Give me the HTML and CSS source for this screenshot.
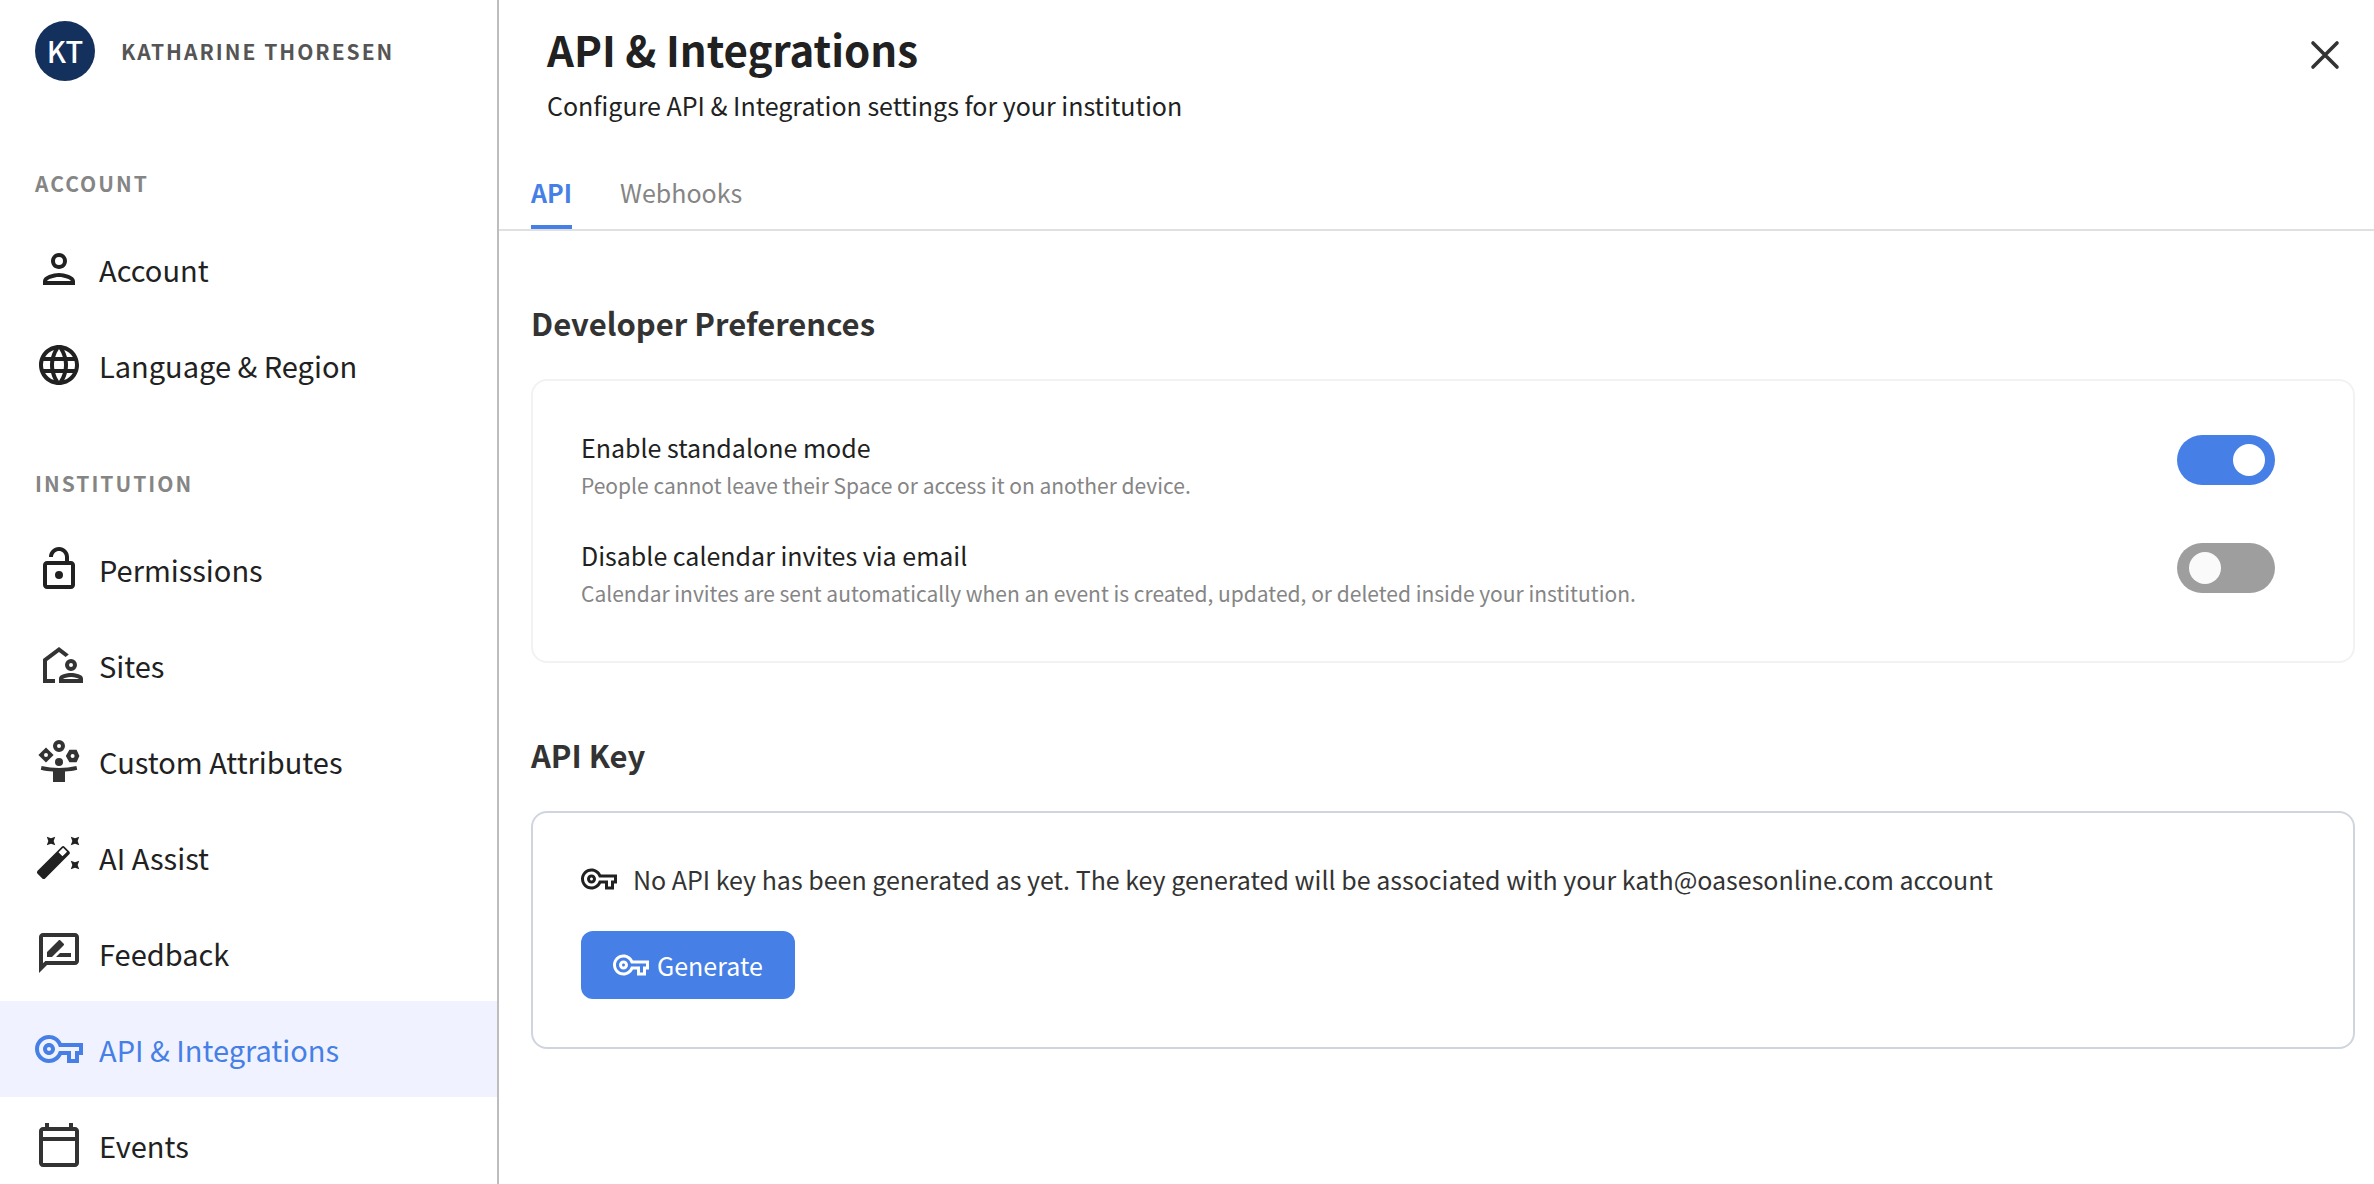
FILE: index.html
```html
<!DOCTYPE html>
<html lang="en">
  <head>
    <title>API &amp; Integrations</title>
    <meta charset="utf-8" />
    <meta name="viewport" content="width=device-width, initial-scale=1" />
    <link rel="stylesheet" href="styles.css">
  </head>
  <body>
    <!-- shared icon, used in the sidebar, the key card and the button -->
    <svg class="sprite" aria-hidden="true">
      <symbol id="icon-key" viewBox="0 0 24 24">
        <path d="M22 19h-6v-4h-2.68c-1.14 2.42-3.6 4-6.32 4-3.86 0-7-3.14-7-7s3.14-7 7-7c2.72 0 5.17 1.58 6.32 4H24v6h-2v4zm-4-2h2v-4h2v-2H11.94l-.23-.67C11.01 8.34 9.11 7 7 7c-2.76 0-5 2.24-5 5s2.24 5 5 5c2.11 0 4.01-1.34 4.71-3.33l.23-.67H18v4zM7 15c-1.65 0-3-1.35-3-3s1.35-3 3-3 3 1.35 3 3-1.35 3-3 3zm0-4c-.55 0-1 .45-1 1s.45 1 1 1 1-.45 1-1-.45-1-1-1z"/>
      </symbol>
    </svg>

    <div class="layout">
      <aside class="sidebar">
        <div class="profile">
          <span class="avatar">KT</span>
          <span class="profile-name">KATHARINE THORESEN</span>
        </div>

        <nav>
          <h2 class="nav-label">ACCOUNT</h2>
          <a class="nav-item" href="#">
            <svg class="icon" viewBox="0 0 24 24"><path d="M12 6a2 2 0 1 1 0 4 2 2 0 0 1 0-4m0 10c2.7 0 5.8 1.29 6 2H6c.23-.72 3.31-2 6-2m0-12C9.79 4 8 5.79 8 8s1.79 4 4 4 4-1.79 4-4-1.79-4-4-4zm0 10c-2.67 0-8 1.34-8 4v2h16v-2c0-2.66-5.33-4-8-4z"/></svg>
            Account
          </a>
          <a class="nav-item" href="#">
            <svg class="icon" viewBox="0 0 24 24"><path d="M11.99 2C6.47 2 2 6.48 2 12s4.47 10 9.99 10C17.52 22 22 17.52 22 12S17.52 2 11.99 2zm6.93 6h-2.95c-.32-1.25-.78-2.45-1.38-3.56 1.84.63 3.37 1.91 4.33 3.56zM12 4.04c.83 1.2 1.48 2.53 1.91 3.96h-3.82c.43-1.43 1.08-2.76 1.91-3.96zM4.26 14C4.1 13.36 4 12.69 4 12s.1-1.36.26-2h3.38c-.08.66-.14 1.32-.14 2s.06 1.34.14 2H4.26zm.82 2h2.95c.32 1.25.78 2.45 1.38 3.56-1.84-.63-3.37-1.9-4.33-3.56zm2.95-8H5.08c.96-1.66 2.49-2.93 4.33-3.56C8.81 5.55 8.35 6.75 8.03 8zM12 19.96c-.83-1.2-1.48-2.53-1.91-3.96h3.82c-.43 1.43-1.08 2.76-1.91 3.96zM14.34 14H9.66c-.09-.66-.16-1.32-.16-2s.07-1.35.16-2h4.68c.09.65.16 1.32.16 2s-.07 1.34-.16 2zm.25 5.56c.6-1.11 1.06-2.31 1.38-3.56h2.95c-.96 1.65-2.49 2.93-4.33 3.56zM16.36 14c.08-.66.14-1.32.14-2s-.06-1.34-.14-2h3.38c.16.64.26 1.31.26 2s-.1 1.36-.26 2h-3.38z"/></svg>
            Language &amp; Region
          </a>

          <h2 class="nav-label">INSTITUTION</h2>
          <a class="nav-item" href="#">
            <svg class="icon" viewBox="0 0 24 24"><path d="M18 8h-1V6c0-2.76-2.24-5-5-5S7 3.24 7 6h2c0-1.66 1.34-3 3-3s3 1.34 3 3v2H6c-1.1 0-2 .9-2 2v10c0 1.1.9 2 2 2h12c1.1 0 2-.9 2-2V10c0-1.1-.9-2-2-2zm0 12H6V10h12v10zm-6-3a2 2 0 1 0 0-4 2 2 0 0 0 0 4z"/></svg>
            Permissions
          </a>
          <a class="nav-item" href="#">
            <svg class="icon icon-soft" viewBox="0 0 24 24"><path d="M4 21V9l8-6 4.9 3.7-1.6 1.3L12 5.5 6 10v9h4v2z"/><path fill-rule="evenodd" d="M18 9a3 3 0 1 0 0 6 3 3 0 0 0 0-6zm0 2a1 1 0 1 1 0 2 1 1 0 0 1 0-2zM18 16c-2 0-6 .7-6 2.7V21h12v-2.3c0-2-4-2.7-6-2.7zm-4 3c.5-.5 2.2-1 4-1s3.500.5 4 1z"/></svg>
            Sites
          </a>
          <a class="nav-item" href="#">
            <svg class="icon icon-soft" viewBox="0 0 24 24"><path fill-rule="evenodd" d="M12 1.500a3 3 0 1 0 0 6 3 3 0 0 0 0-6zm0 2a1 1 0 1 1 0 2 1 1 0 0 1 0-2zM5.500 5.200 1.700 9l3.800 3.800L9.300 9zm0 2.800a1 1 0 1 1 0 2 1 1 0 0 1 0-2zM17.200 6.400 15.400 9.500l1.800 3.100h3.600l1.400-3.100-1.400-3.100zM18.800 8.500a1 1 0 1 1 0 2 1 1 0 0 1 0-2z"/><circle cx="12" cy="12.500" r="2"/><path d="M3.300 14.500c5.500 1.300 11.900 1.300 17.400 0l.4 1.900c-1.900.5-4 .8-6.100.9v5.200H9v-5.200c-2.100-.1-4.200-.4-6.100-.9z"/></svg>
            Custom Attributes
          </a>
          <a class="nav-item" href="#">
            <svg class="icon" viewBox="0 0 24 24"><path d="M20 7l.94-2.060L23 4l-2.060-.94L20 1l-.94 2.060L17 4l2.060.94z" transform="rotate(45 20 4)"/><path d="M8 7l.94-2.060L11 4l-2.060-.94L8 1l-.94 2.060L5 4l2.060.94z" transform="rotate(45 8 4)"/><path d="M20 19l.94-2.060L23 16l-2.060-.94L20 13l-.94 2.060L17 16l2.060.94z" transform="rotate(45 20 16)"/><path d="M17.140 9.230l-2.370-2.370c-.4-.4-1.020-.4-1.410 0L1.290 18.930c-.39.39-.39 1.020 0 1.410l2.370 2.370c.39.39 1.020.39 1.410 0L17.140 10.640c.39-.39.39-1.020 0-1.410zm-3.400 2.400-1.970-1.970 2.290-2.290 1.970 1.970z"/></svg>
            AI Assist
          </a>
          <a class="nav-item" href="#">
            <svg class="icon icon-soft" viewBox="0 0 24 24"><path fill-rule="evenodd" d="M20 2H4c-1.100 0-2 .9-2 2v18l4-4h14c1.100 0 2-.9 2-2V4c0-1.100-.9-2-2-2zm0 14H5.170L4 17.170V4h16v12z"/><path d="M6 14v-2.470l5.900-5.900c.2-.2.510-.2.710 0l1.770 1.770c.2.2.2.510 0 .710L8.500 14zM18 14h-7.500l2-2H18z"/></svg>
            Feedback
          </a>
          <a class="nav-item nav-item-active" href="#" aria-current="page">
            <svg class="icon"><use href="#icon-key"/></svg>
            API &amp; Integrations
          </a>
          <a class="nav-item" href="#">
            <svg class="icon icon-soft" viewBox="0 0 24 24"><path d="M20 3h-1V1h-2v2H7V1H5v2H4c-1.100 0-2 .9-2 2v16c0 1.100.9 2 2 2h16c1.100 0 2-.9 2-2V5c0-1.100-.9-2-2-2zm0 18H4V10h16v11zm0-13H4V5h16v3z"/></svg>
            Events
          </a>
        </nav>
      </aside>

      <main class="main">
        <header class="page-header">
          <div>
            <h1 class="page-title">API &amp; Integrations</h1>
            <p class="page-subtitle">Configure API &amp; Integration settings for your institution</p>
          </div>
          <button class="close" type="button" aria-label="Close">
            <svg class="icon" viewBox="0 0 24 24"><path d="M6 6l12 12M18 6L6 18" stroke="currentColor" stroke-width="1.800" stroke-linecap="round"/></svg>
          </button>
        </header>

        <nav class="tabs">
          <a class="tab tab-active" href="#">API</a>
          <a class="tab" href="#">Webhooks</a>
        </nav>

        <section class="section">
          <h2 class="section-title">Developer Preferences</h2>
          <div class="card">
            <div class="setting">
              <div>
                <label class="setting-name" for="standalone">Enable standalone mode</label>
                <p class="setting-desc">People cannot leave their Space or access it on another device.</p>
              </div>
              <input class="switch" type="checkbox" role="switch" id="standalone" checked />
            </div>
            <div class="setting">
              <div>
                <label class="setting-name" for="invites">Disable calendar invites via email</label>
                <p class="setting-desc">Calendar invites are sent automatically when an event is created, updated, or deleted inside your institution.</p>
              </div>
              <input class="switch" type="checkbox" role="switch" id="invites" />
            </div>
          </div>
        </section>

        <section class="section">
          <h2 class="section-title">API Key</h2>
          <div class="card card-key">
            <p class="key-note">
              <svg class="icon icon-small"><use href="#icon-key"/></svg>
              No API key has been generated as yet. The key generated will be associated with your kath@oasesonline.com account
            </p>
            <button class="generate" type="button">
              <svg class="icon icon-small"><use href="#icon-key"/></svg>
              Generate
            </button>
          </div>
        </section>
      </main>
    </div>
  </body>
</html>
```
FILE: styles.css
```css
* {
  box-sizing: border-box;
  margin: 0;
  padding: 0;
}

body {
  font-family: "Noto Sans CJK SC", "Open Sans", sans-serif;
  font-size: 25px;
  line-height: 36px;
  color: #212121;
  background: #fff;
}

a {
  color: inherit;
  text-decoration: none;
}

button {
  font: inherit;
  border: none;
  cursor: pointer;
}

.sprite {
  display: none;
}

.icon {
  width: 48px;
  height: 48px;
  flex: none;
  fill: currentColor;
}

.icon-soft {
  color: #333;
}

.icon-small {
  width: 36px;
  height: 36px;
}

.layout {
  display: flex;
  height: 100vh;
}

/* sidebar */
.sidebar {
  width: 499px;
  flex: none;
  overflow: hidden;
  border-right: 2px solid #bdbdbd;
}

.profile {
  display: flex;
  align-items: center;
  gap: 26px;
  padding: 21px 35px 32px;
}

.avatar {
  width: 60px;
  height: 60px;
  border-radius: 50%;
  background: #14305c;
  color: #fff;
  font-size: 29px;
  font-weight: 500;
  line-height: 58px;
  text-align: center;
}

.profile-name,
.nav-label {
  font-size: 21px;
  font-weight: 700;
  letter-spacing: 2px;
}

.profile-name {
  color: #555;
}

.nav-label {
  padding: 52px 35px 20px;
  color: #858585;
}

.nav-item {
  display: flex;
  align-items: center;
  gap: 16px;
  height: 96px;
  padding: 0 35px;
  font-size: 29px;
}

.nav-item-active {
  color: #467fe6;
  background: #f0f3ff;
}

/* main column */
.main {
  flex: 1;
  min-width: 0;
  overflow: hidden;
}

.page-header {
  display: flex;
  justify-content: space-between;
  align-items: flex-start;
  padding: 17px 25px 0 48px;
}

.page-title {
  font-size: 42px;
  line-height: 64px;
}

.page-subtitle {
  padding-top: 6px;
}

.close {
  display: flex;
  margin-top: 14px;
  background: none;
  color: #333;
}

.tabs {
  display: flex;
  gap: 48px;
  padding: 40px 32px 0;
  border-bottom: 2px solid #e0e0e0;
}

.tab {
  padding: 11px 0 15px;
  border-bottom: 4px solid transparent;
  color: #858585;
}

.tab-active {
  border-color: #467fe6;
  color: #467fe6;
  font-weight: 700;
}

.section {
  padding: 68px 19px 0 32px;
}

.section-title {
  margin-bottom: 32px;
  font-size: 31px;
  line-height: 48px;
  color: #333;
}

.card {
  display: flex;
  flex-direction: column;
  gap: 34px;
  padding: 48px 78px 50px 48px;
  border: 2px solid #f2f2f2;
  border-radius: 16px;
}

.card-key {
  align-items: flex-start;
  border-color: #d0d5dd;
  padding: 48px;
}

.setting {
  display: flex;
  justify-content: space-between;
  align-items: flex-start;
}

.setting-name {
  display: block;
}

.setting-desc {
  padding-top: 2px;
  font-size: 21px;
  color: #858585;
}

.switch {
  appearance: none;
  display: flex;
  flex: none;
  align-items: center;
  width: 98px;
  height: 50px;
  margin-top: 6px;
  padding: 0 12px;
  border-radius: 25px;
  background: #9e9e9e;
  cursor: pointer;
}

.switch::before {
  content: "";
  width: 32px;
  height: 32px;
  border-radius: 50%;
  background: #fafafa;
}

.switch:checked {
  justify-content: flex-end;
  padding-right: 10px;
  background: #467fe6;
}

.switch:checked::before {
  background: #fff;
}

.key-note {
  display: flex;
  align-items: center;
  gap: 16px;
  color: #333;
}

.key-note .icon {
  color: #212121;
}

.generate {
  display: flex;
  align-items: center;
  gap: 8px;
  padding: 16px 32px;
  border-radius: 12px;
  background: #467fe6;
  color: #fff;
}
```
